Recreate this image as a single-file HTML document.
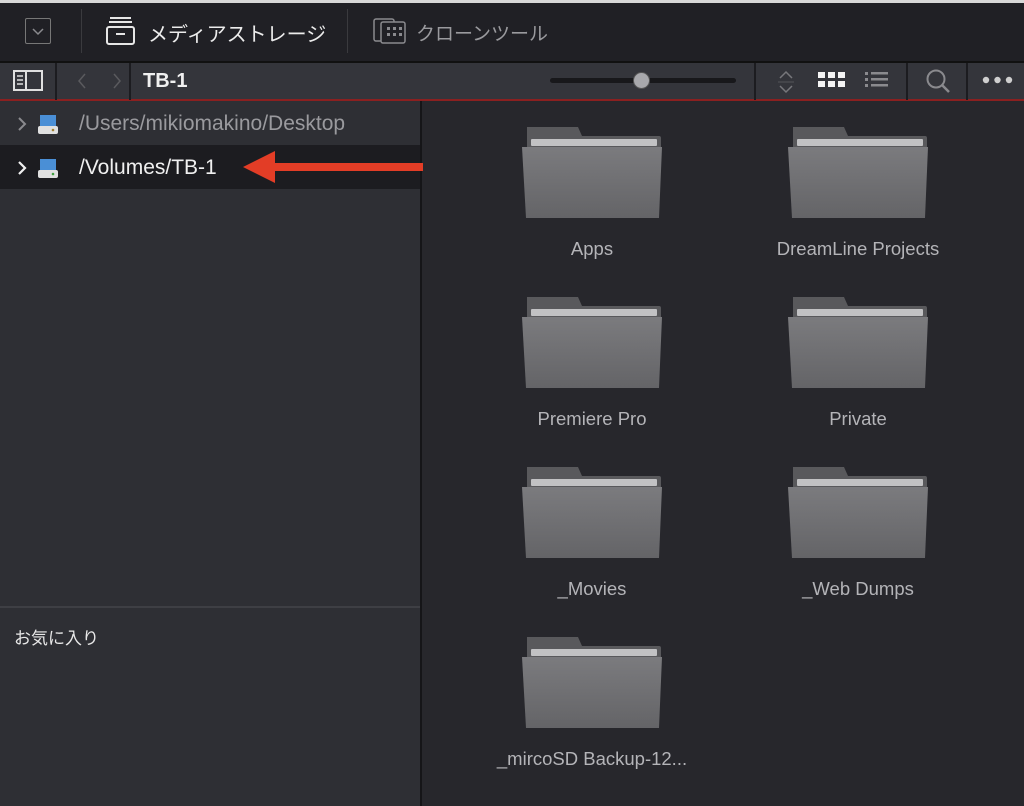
<!DOCTYPE html>
<html><head><meta charset="utf-8"><style>
*{margin:0;padding:0;box-sizing:border-box}
body{width:1024px;height:806px;overflow:hidden;background:#27272c;font-family:"Liberation Sans","Noto Sans CJK JP",sans-serif;position:relative}
.a{position:absolute}
.lbl{position:absolute;width:260px;text-align:center;font-size:18.5px;color:#b4b4b8}
</style></head><body>
<div class="a" style="left:0;top:0;width:1024px;height:3px;background:#d8d8d8"></div>
<div class="a" style="left:0;top:3px;width:1024px;height:58px;background:#202025"></div>
<div class="a" style="left:0;top:61px;width:1024px;height:2px;background:#111"></div>
<div class="a" style="left:25px;top:18px;width:26px;height:26px;border:1.5px solid #777;border-radius:2px"></div>
<svg class="a" style="left:30px;top:24px" width="16" height="14"><path d="M3 5l5 5 5-5" stroke="#8a8a8e" stroke-width="1.5" fill="none"/></svg>
<div class="a" style="left:81px;top:9px;width:1px;height:44px;background:#3a3a3e"></div>
<svg class="a" style="left:104px;top:16px" width="32" height="30"><rect x="3" y="11" width="27" height="17" rx="2" stroke="#e6e6e6" stroke-width="2" fill="none"/><path d="M6 2h21M5 6h23" stroke="#e6e6e6" stroke-width="2"/><path d="M12 18h9" stroke="#e6e6e6" stroke-width="2"/></svg>
<div class="a" style="left:148px;top:18px;font-size:20px;color:#ececec">メディアストレージ</div>
<div class="a" style="left:347px;top:9px;width:1px;height:44px;background:#3a3a3e"></div>
<svg class="a" style="left:372px;top:17px" width="36" height="28"><rect x="2" y="2" width="20" height="22" rx="2" stroke="#8a8a8e" stroke-width="1.5" fill="none"/><rect x="9" y="5" width="24" height="21" rx="2" stroke="#8a8a8e" stroke-width="1.5" fill="#202025"/><g fill="#8a8a8e"><rect x="15" y="10" width="3" height="3"/><rect x="21" y="10" width="3" height="3"/><rect x="27" y="10" width="3" height="3"/><rect x="15" y="16" width="3" height="3"/><rect x="21" y="16" width="3" height="3"/><rect x="27" y="16" width="3" height="3"/></g></svg>
<div class="a" style="left:416px;top:19px;font-size:19px;color:#9a9a9e">クローンツール</div>
<div class="a" style="left:0;top:63px;width:1024px;height:37px;background:#34353b"></div>
<div class="a" style="left:0;top:99px;width:1024px;height:2px;background:#8b2020"></div>
<div class="a" style="left:55px;top:63px;width:2px;height:37px;background:#1c1c20"></div>
<div class="a" style="left:129px;top:63px;width:2px;height:37px;background:#1c1c20"></div>
<div class="a" style="left:754px;top:63px;width:2px;height:37px;background:#1c1c20"></div>
<div class="a" style="left:906px;top:63px;width:2px;height:37px;background:#1c1c20"></div>
<div class="a" style="left:966px;top:63px;width:2px;height:37px;background:#1c1c20"></div>
<svg class="a" style="left:13px;top:69px" width="30" height="24"><rect x="1" y="2" width="28" height="19" stroke="#e0e0e0" stroke-width="2" fill="none"/><path d="M13 2v19" stroke="#e0e0e0" stroke-width="2"/><path d="M4 7h6M4 11h6M4 15h6" stroke="#e0e0e0" stroke-width="1.5"/></svg>
<svg class="a" style="left:70px;top:71px" width="60" height="20"><path d="M15 3l-6 7 6 7M44 3l6 7-6 7" stroke="#5a5a5e" stroke-width="1.5" fill="none"/></svg>
<div class="a" style="left:143px;top:70px;font-size:20px;font-weight:bold;color:#f0f0f0">TB-1</div>
<div class="a" style="left:550px;top:78px;width:186px;height:5px;border-radius:3px;background:#18181b"></div>
<div class="a" style="left:633px;top:72px;width:17px;height:17px;border-radius:50%;background:#a8a8ac;border:1px solid #555"></div>
<svg class="a" style="left:774px;top:69px" width="24" height="26"><path d="M6 9l6-6 6 6M6 17l6 6 6-6" stroke="#77777b" stroke-width="1.5" fill="none"/><path d="M4 13h16" stroke="#55555a" stroke-width="1"/></svg>
<svg class="a" style="left:818px;top:72px" width="28" height="18"><g fill="#f4f4f4"><rect x="0" y="0" width="7" height="6"/><rect x="10" y="0" width="7" height="6"/><rect x="20" y="0" width="7" height="6"/><rect x="0" y="9" width="7" height="6"/><rect x="10" y="9" width="7" height="6"/><rect x="20" y="9" width="7" height="6"/></g></svg>
<svg class="a" style="left:865px;top:72px" width="26" height="18"><g fill="#8a8a8e"><rect x="0" y="0" width="3" height="3"/><rect x="0" y="6" width="3" height="3"/><rect x="0" y="12" width="3" height="3"/><rect x="6" y="0" width="17" height="2.5"/><rect x="6" y="6" width="17" height="2.5"/><rect x="6" y="12" width="17" height="2.5"/></g></svg>
<svg class="a" style="left:924px;top:67px" width="28" height="28"><circle cx="12" cy="12" r="8.5" stroke="#8a8a8e" stroke-width="2" fill="none"/><path d="M18 18l7 7" stroke="#8a8a8e" stroke-width="2.5"/></svg>
<svg class="a" style="left:981px;top:75px" width="34" height="10"><g fill="#cfcfcf"><circle cx="5" cy="5" r="3.2"/><circle cx="16.5" cy="5" r="3.2"/><circle cx="28" cy="5" r="3.2"/></g></svg>
<div class="a" style="left:0;top:101px;width:420px;height:705px;background:#2e2f34"></div>
<div class="a" style="left:420px;top:101px;width:2px;height:705px;background:#151518"></div>
<div class="a" style="left:0;top:145px;width:420px;height:44px;background:#1c1c20"></div>
<div class="a" style="left:0;top:606px;width:420px;height:2px;background:#3e3f44"></div>
<svg class="a" style="left:15px;top:115px" width="14" height="18"><path d="M4 3l6 6-6 6" stroke="#8a8a8e" stroke-width="2" fill="none"/></svg>
<svg class="a" style="left:15px;top:159px" width="14" height="18"><path d="M4 3l6 6-6 6" stroke="#f0f0f0" stroke-width="2.2" fill="none"/></svg>
<svg class="a" style="left:37px;top:112px" width="22" height="24"><path d="M3 3h16v13H3z" fill="#4a8fd6"/><rect x="1" y="14" width="20" height="8" rx="2" fill="#e0e0e0"/><circle cx="16" cy="18" r="1.3" fill="#a08030"/></svg>
<svg class="a" style="left:37px;top:156px" width="22" height="24"><path d="M3 3h16v13H3z" fill="#4a8fd6"/><rect x="1" y="14" width="20" height="8" rx="2" fill="#e0e0e0"/><circle cx="16" cy="18" r="1.3" fill="#40a040"/></svg>
<div class="a" style="left:79px;top:112px;font-size:21px;color:#9a9a9e">/Users/mikiomakino/Desktop</div>
<div class="a" style="left:79px;top:156px;font-size:21px;color:#f0f0f0">/Volumes/TB-1</div>
<svg class="a" style="left:225px;top:148px" width="200" height="38"><path d="M18 19L50 3V15H198V23H50V35Z" fill="#e33d26"/></svg>
<div class="a" style="left:14px;top:624px;font-size:17px;color:#e8e8e8">お気に入り</div>
<svg width="0" height="0" style="position:absolute"><defs><linearGradient id="g" x1="0" y1="0" x2="0" y2="1"><stop offset="0" stop-color="#7b7b7e"/><stop offset="1" stop-color="#646467"/></linearGradient>
<symbol id="f" viewBox="0 0 140 92"><path d="M5 0h51l4 9h77a2 2 0 0 1 2 2v20H5z" fill="#59595c"/><rect x="9" y="12" width="126" height="7" rx="1" fill="#c2c2c4"/><path d="M0 20h140l-3 71H4z" fill="url(#g)"/></symbol></defs></svg>
<svg class="a" style="left:522px;top:127px" width="140" height="92"><use href="#f"/></svg>
<svg class="a" style="left:788px;top:127px" width="140" height="92"><use href="#f"/></svg>
<svg class="a" style="left:522px;top:297px" width="140" height="92"><use href="#f"/></svg>
<svg class="a" style="left:788px;top:297px" width="140" height="92"><use href="#f"/></svg>
<svg class="a" style="left:522px;top:467px" width="140" height="92"><use href="#f"/></svg>
<svg class="a" style="left:788px;top:467px" width="140" height="92"><use href="#f"/></svg>
<svg class="a" style="left:522px;top:637px" width="140" height="92"><use href="#f"/></svg>
<div class="lbl" style="left:462px;top:238px">Apps</div>
<div class="lbl" style="left:728px;top:238px">DreamLine Projects</div>
<div class="lbl" style="left:462px;top:408px">Premiere Pro</div>
<div class="lbl" style="left:728px;top:408px">Private</div>
<div class="lbl" style="left:462px;top:578px">_Movies</div>
<div class="lbl" style="left:728px;top:578px">_Web Dumps</div>
<div class="lbl" style="left:462px;top:748px">_mircoSD Backup-12...</div>
</body></html>
